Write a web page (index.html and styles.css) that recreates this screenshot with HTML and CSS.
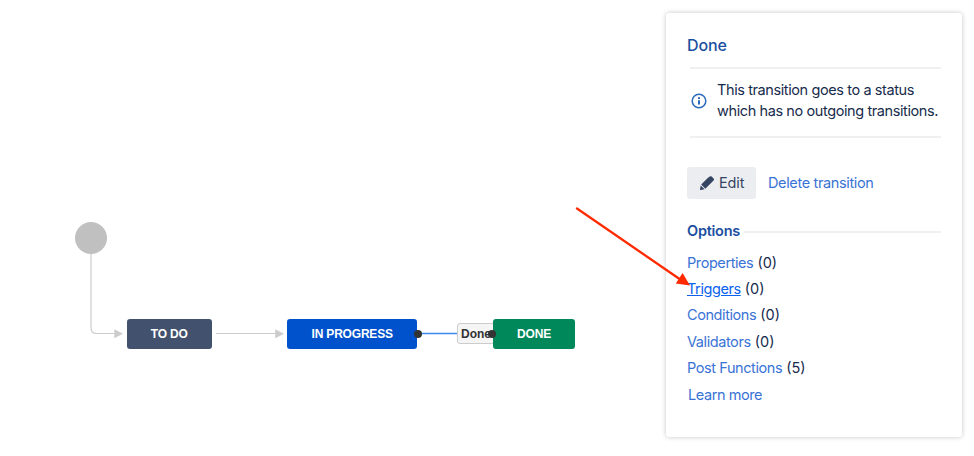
FILE: index.html
```html
<!DOCTYPE html>
<html lang="en">
<head>
<meta charset="utf-8">
<title>Workflow</title>
<link rel="stylesheet" href="styles.css">
</head>
<body>
<main class="workflow">
  <section class="canvas">
    <svg class="edges" width="660" height="456" viewBox="0 0 660 456">
      <path class="edge" d="M91 252V328Q91 333.500 96.500 333.500H116"/>
      <path class="edge-head" d="M114.300 329.200L123 333.700L114.300 338.200Z"/>
      <path class="edge" d="M216 333.500H276"/>
      <path class="edge-head" d="M275.200 329.200L284 333.700L275.200 338.200Z"/>
      <path class="edge selected" d="M417 333.500H458"/>
    </svg>
    <div class="start"></div>
    <div class="node todo">TO DO</div>
    <div class="node progress">IN PROGRESS</div>
    <div class="edge-label">Done</div>
    <div class="node done">DONE</div>
    <div class="port from"></div>
    <div class="port to"></div>
  </section>
  <aside class="panel">
    <h2 class="title">Done</h2>
    <div class="notice">
      <svg class="info" width="16" height="16" viewBox="0 0 16 16">
        <circle cx="8" cy="8" r="6.800"/>
        <path class="mark" d="M8 7.200V11.600M8 4.300V6"/>
      </svg>
      <p class="message">This transition goes to a status<br>which has no outgoing transitions.</p>
    </div>
    <div class="actions">
      <button class="edit">
        <svg width="16" height="16" viewBox="0 0 16 16">
          <path d="M9.200 2.700L13.300 6.800L14.600 5.500Q15.500 4.500 14.600 3.500L12.700 1.600Q11.700.700 10.700 1.600ZM9.200 2.600L2.200 9.600L6.300 13.700L13.300 6.700ZM1.700 10.400L1 14.400Q.900 15.200 1.700 15L5.600 14.200Z"/>
        </svg>
        <span>Edit</span>
      </button>
      <a class="delete">Delete transition</a>
    </div>
    <h3 class="options-title"><span>Options</span></h3>
    <ul class="options">
      <li><a>Properties</a> <span>(0)</span></li>
      <li><a class="hover">Triggers</a> <span>(0)</span></li>
      <li><a>Conditions</a> <span>(0)</span></li>
      <li><a>Validators</a> <span>(0)</span></li>
      <li><a>Post Functions</a> <span>(5)</span></li>
      <li class="learn"><a>Learn more</a></li>
    </ul>
  </aside>
  <svg class="pointer" width="974" height="456" viewBox="0 0 974 456">
    <path class="shaft" d="M577 208.500L681 280"/>
    <path class="tip" d="M690 285.500L675.800 283.600L682.600 273Z"/>
  </svg>
</main>
</body>
</html>
```

FILE: styles.css
```css
* { box-sizing: border-box; }
body {
  margin: 0;
  background: #fff;
  color: #172b4d;
  font: 14.5px/21px Inter, "Liberation Sans", sans-serif;
}
.workflow {
  position: relative;
  display: flex;
  justify-content: space-between;
  width: 974px;
  height: 456px;
  overflow: hidden;
}
.canvas { position: relative; width: 660px; flex: none; }
.edges, .pointer { position: absolute; left: 0; top: 0; pointer-events: none; }
.edge { fill: none; stroke: #ccc; stroke-width: 1.2; }
.edge-head { fill: #ccc; }
.edge.selected { stroke: #3b8af2; stroke-width: 1.4; }
.start {
  position: absolute;
  left: 75px;
  top: 221.5px;
  width: 32px;
  height: 32px;
  border-radius: 50%;
  background: #c0c0c0;
}
.node {
  position: absolute;
  top: 319px;
  height: 29.5px;
  border-radius: 3px;
  color: #fff;
  font: bold 12px/30px "Liberation Sans", sans-serif;
  letter-spacing: -.2px;
  text-align: center;
}
.todo { left: 126.5px; width: 85.5px; background: #42526e; }
.progress { left: 287.4px; width: 129.6px; background: #0052cc; }
.done { left: 493px; width: 82px; background: #00875a; }
.edge-label {
  position: absolute;
  left: 457px;
  top: 323px;
  width: 38px;
  height: 21px;
  padding-left: 3px;
  border: 1px solid #ccc;
  border-radius: 3px;
  background: #f5f5f5;
  color: #333;
  font: bold 12px/20px "Liberation Sans", sans-serif;
}
.port {
  position: absolute;
  top: 329.5px;
  width: 8.5px;
  height: 8.5px;
  border-radius: 50%;
  background: #333;
}
.from { left: 413.5px; }
.to { left: 487.5px; }
.panel {
  width: 296px;
  height: 424px;
  margin: 13px 12px 0 0;
  padding: 22px 21px 0;
  border-radius: 3px;
  background: #fff;
  box-shadow: 0 0 5px rgba(0, 0, 0, .23);
}
.title {
  margin: 0;
  color: #1c4f9f;
  font-size: 16px;
  font-weight: 500;
  line-height: 20px;
  letter-spacing: -.1px;
}
.notice {
  display: flex;
  align-items: center;
  height: 71px;
  margin: 12px 0 0 3px;
  border: solid #f0f0f0;
  border-width: 2px 0;
}
.info { flex: none; margin: -4px 10px 0 1px; fill: none; stroke: #2b69ba; stroke-width: 1.5; }
.info .mark { stroke-width: 2; }
.message { margin: -5px 0 0; white-space: nowrap; letter-spacing: -.4px; }
.actions { display: flex; align-items: center; gap: 12px; margin-top: 29px; }
.edit {
  display: flex;
  align-items: center;
  gap: 4px;
  width: 69px;
  height: 32px;
  padding: 0 0 1px 12px;
  border: 0;
  border-radius: 3px;
  background: #ecedf0;
  color: #344563;
  font: inherit;
  letter-spacing: -.15px;
}
.edit svg { fill: #344563; flex: none; }
.delete { margin-top: -1px; letter-spacing: -.36px; }
.delete, .options a { color: #3973d5; }
.options-title {
  display: flex;
  align-items: center;
  gap: 4px;
  margin: 21px 0 0;
  color: #1c4f9f;
  font-size: 14.5px;
  font-weight: 600;
  line-height: 21px;
  letter-spacing: -.25px;
}
.options-title::after { content: ""; flex: 1; height: 2px; margin-top: 2px; background: #f0f0f0; }
.options { margin: 8.6px 0 0; padding: 0; list-style: none; }
.options li { height: 26.4px; line-height: 26.4px; white-space: nowrap; }
.options a { letter-spacing: -.42px; }
.options .hover { color: #0b62ed; text-decoration: underline; }
.options .learn { padding-left: 1px; }
.shaft { stroke: #ff2a00; stroke-width: 2.3; stroke-linecap: round; }
.tip { fill: #ff2a00; }
```
